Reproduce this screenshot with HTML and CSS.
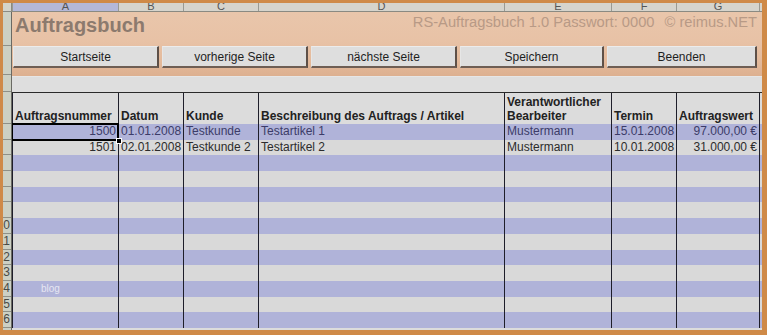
FILE: index.html
```html
<!DOCTYPE html>
<html lang="de">
<head>
<meta charset="utf-8">
<title>Auftragsbuch</title>
<link rel="stylesheet" href="styles.css">
</head>
<body>
<div class="frame">
  <div class="corner"></div>
  <div class="colhdr">
    <div class="ch sel">A</div>
    <div class="ch">B</div>
    <div class="ch">C</div>
    <div class="ch">D</div>
    <div class="ch">E</div>
    <div class="ch">F</div>
    <div class="ch last">G</div>
  </div>
  <div class="rowhdr">
    <div class="rh rh-title"></div>
    <div class="rh rh-btn"></div>
    <div class="rh rh-gap"></div>
    <div class="rh rh-head"></div>
    <div class="rh"></div>
    <div class="rh"></div>
    <div class="rh"></div>
    <div class="rh"></div>
    <div class="rh"></div>
    <div class="rh"></div>
    <div class="rh">10</div>
    <div class="rh">11</div>
    <div class="rh">12</div>
    <div class="rh">13</div>
    <div class="rh">14</div>
    <div class="rh">15</div>
    <div class="rh">16</div>
  </div>
  <div class="sheet">
    <div class="banner">
      <div class="titlebar">
        <h1 class="title">Auftragsbuch</h1>
        <div class="info">RS-Auftragsbuch 1.0 Passwort: 0000 <span class="copy">© reimus.NET</span></div>
      </div>
      <div class="buttons">
        <div class="btn b1">Startseite</div>
        <div class="btn b2">vorherige Seite</div>
        <div class="btn b3">nächste Seite</div>
        <div class="btn b4">Speichern</div>
        <div class="btn b5">Beenden</div>
      </div>
    </div>
    <div class="gap"></div>
    <div class="table">
      <div class="row head">
        <div class="c">Auftragsnummer</div>
        <div class="c">Datum</div>
        <div class="c">Kunde</div>
        <div class="c">Beschreibung des Auftrags / Artikel</div>
        <div class="c">Verantwortlicher<br>Bearbeiter</div>
        <div class="c">Termin</div>
        <div class="c">Auftragswert</div>
      </div>
      <div class="row blue first">
        <div class="c num active">1500<span class="handle"></span></div>
        <div class="c">01.01.2008</div>
        <div class="c">Testkunde</div>
        <div class="c">Testartikel 1</div>
        <div class="c">Mustermann</div>
        <div class="c">15.01.2008</div>
        <div class="c num">97.000,00 €</div>
      </div>
      <div class="row grey">
        <div class="c num">1501</div>
        <div class="c">02.01.2008</div>
        <div class="c">Testkunde 2</div>
        <div class="c">Testartikel 2</div>
        <div class="c">Mustermann</div>
        <div class="c">10.01.2008</div>
        <div class="c num">31.000,00 €</div>
      </div>
      <div class="row blue"><div class="c"></div><div class="c"></div><div class="c"></div><div class="c"></div><div class="c"></div><div class="c"></div><div class="c"></div></div>
      <div class="row grey"><div class="c"></div><div class="c"></div><div class="c"></div><div class="c"></div><div class="c"></div><div class="c"></div><div class="c"></div></div>
      <div class="row blue"><div class="c"></div><div class="c"></div><div class="c"></div><div class="c"></div><div class="c"></div><div class="c"></div><div class="c"></div></div>
      <div class="row grey"><div class="c"></div><div class="c"></div><div class="c"></div><div class="c"></div><div class="c"></div><div class="c"></div><div class="c"></div></div>
      <div class="row blue"><div class="c"></div><div class="c"></div><div class="c"></div><div class="c"></div><div class="c"></div><div class="c"></div><div class="c"></div></div>
      <div class="row grey"><div class="c"></div><div class="c"></div><div class="c"></div><div class="c"></div><div class="c"></div><div class="c"></div><div class="c"></div></div>
      <div class="row blue"><div class="c"></div><div class="c"></div><div class="c"></div><div class="c"></div><div class="c"></div><div class="c"></div><div class="c"></div></div>
      <div class="row grey"><div class="c"></div><div class="c"></div><div class="c"></div><div class="c"></div><div class="c"></div><div class="c"></div><div class="c"></div></div>
      <div class="row blue"><div class="c"><span class="blog">blog</span></div><div class="c"></div><div class="c"></div><div class="c"></div><div class="c"></div><div class="c"></div><div class="c"></div></div>
      <div class="row grey"><div class="c"></div><div class="c"></div><div class="c"></div><div class="c"></div><div class="c"></div><div class="c"></div><div class="c"></div></div>
      <div class="row blue"><div class="c"></div><div class="c"></div><div class="c"></div><div class="c"></div><div class="c"></div><div class="c"></div><div class="c"></div></div>
    </div>
  </div>
</div>
</body>
</html>
```
FILE: styles.css
```css
html, body {
  margin: 0;
  padding: 0;
  background: #cf8a48;
}

.frame {
  width: 767px;
  height: 335px;
  box-sizing: border-box;
  border-style: solid;
  border-color: #cf8a48;
  border-width: 3px 5px 5px 3px;
  background: #dcdcdc;
  display: grid;
  grid-template-columns: 9px 1fr;
  grid-template-rows: 9px 1fr;
  overflow: hidden;
  font-family: "Liberation Sans", Arial, sans-serif;
}

.corner {
  background: #d4d4cc;
  border-right: 1px solid #8a8a82;
  border-bottom: 1px solid #8a8a82;
  box-sizing: border-box;
}

/* column header */
.colhdr {
  display: grid;
  grid-template-columns: 106px 65px 75px 246px 107px 65px 84px 1fr;
  background: #d6d4cc;
  border-bottom: 1px solid #8a8a82;
  box-sizing: border-box;
  overflow: hidden;
}

.ch {
  border-left: 1px solid #9a9a92;
  box-sizing: border-box;
  text-align: center;
  font-size: 11px;
  line-height: 4px;
  color: #555;
  overflow: hidden;
  padding-top: 1px;
}

.ch.sel {
  background: #b4b8d8;
}

.ch.last {
  border-right: 1px solid #9a9a92;
}

/* row header */
.rowhdr {
  display: flex;
  flex-direction: column;
  background: #ccd0c4;
  border-right: 1px solid #6a6a64;
  box-sizing: border-box;
  overflow: hidden;
}

.rh {
  height: 15.7px;
  flex: none;
  box-sizing: border-box;
  border-bottom: 1px solid #8e9088;
  font-size: 12px;
  line-height: 15px;
  color: #4a4a44;
  text-align: right;
  white-space: nowrap;
  overflow: hidden;
  padding-right: 1px;
  direction: rtl;
}

.rh-title { height: 34px; }
.rh-btn { height: 29px; }
.rh-gap { height: 17px; }
.rh-head { height: 32px; }

/* sheet */
.sheet {
  display: flex;
  flex-direction: column;
  overflow: hidden;
}

.banner {
  height: 64px;
  flex: none;
  background: linear-gradient(#e9c6ab 0%, #e8c2a6 45%, #e5bc9e 70%, #ddb090 100%);
  display: flex;
  flex-direction: column;
}

.titlebar {
  height: 34px;
  display: flex;
  justify-content: space-between;
  align-items: flex-start;
  padding: 0 5px 0 3px;
}

.title {
  margin: 2px 0 0 0;
  font-size: 20px;
  line-height: 22px;
  font-weight: bold;
  color: #8c7a6e;
}

.info {
  margin-top: 2px;
  font-size: 14.7px;
  line-height: 17px;
  color: #b89a86;
  white-space: nowrap;
}

.copy {
  margin-left: 6px;
}

.buttons {
  display: flex;
  gap: 3px;
  padding-left: 1px;
  height: 22px;
}

.btn {
  box-sizing: border-box;
  height: 22px;
  background: #dedede;
  border-top: 1px solid #ececec;
  border-left: 1px solid #e6e6e6;
  border-right: 2px solid #5e5048;
  border-bottom: 2px solid #6e5e54;
  font-size: 12px;
  line-height: 19px;
  padding-top: 1px;
  text-align: center;
  color: #1e1e1e;
}

.b1 { width: 146px; }
.b2 { width: 146px; }
.b3 { width: 146px; }
.b4 { width: 144px; }
.b5 { width: 150px; }

.gap {
  height: 16px;
  flex: none;
  background: #dedede;
  border-top: 1px solid #e6e6e6;
  box-sizing: border-box;
}

.table {
  display: flex;
  flex-direction: column;
}

.row {
  display: grid;
  grid-template-columns: 106px 65px 75px 246px 107px 65px 84px;
  height: 15.7px;
  flex: none;
  font-size: 12px;
  line-height: 15.7px;
}

.c {
  border-left: 1px solid #1e1e2a;
  box-sizing: border-box;
  padding-left: 2px;
  white-space: nowrap;
  overflow: visible;
}

.c:last-child {
  border-right: 1px solid #1e1e2a;
}

.c.num {
  text-align: right;
  padding-right: 2px;
}

.row.head {
  height: 32px;
  background: #dcdcdc;
  border-top: 1px solid #2a2a2a;
  box-sizing: border-box;
  align-items: end;
  font-weight: bold;
  line-height: 14px;
  color: #222;
}

.row.head .c {
  height: 100%;
  display: flex;
  align-items: flex-end;
  padding-bottom: 1px;
}

.row.blue {
  background: #b0b3d9;
  color: #3c3c68;
}

.row.grey {
  background: #d9d9d9;
  color: #2c2c2c;
}

.c.active {
  position: relative;
  outline: 2px solid #000;
  outline-offset: -1px;
  padding-right: 2px;
}

.handle {
  position: absolute;
  right: -4px;
  bottom: -4px;
  width: 4px;
  height: 4px;
  background: #000;
  border: 1px solid #fff;
  z-index: 2;
}

.blog {
  font-size: 10px;
  color: #e6e6f2;
  margin-left: 26px;
}
```
